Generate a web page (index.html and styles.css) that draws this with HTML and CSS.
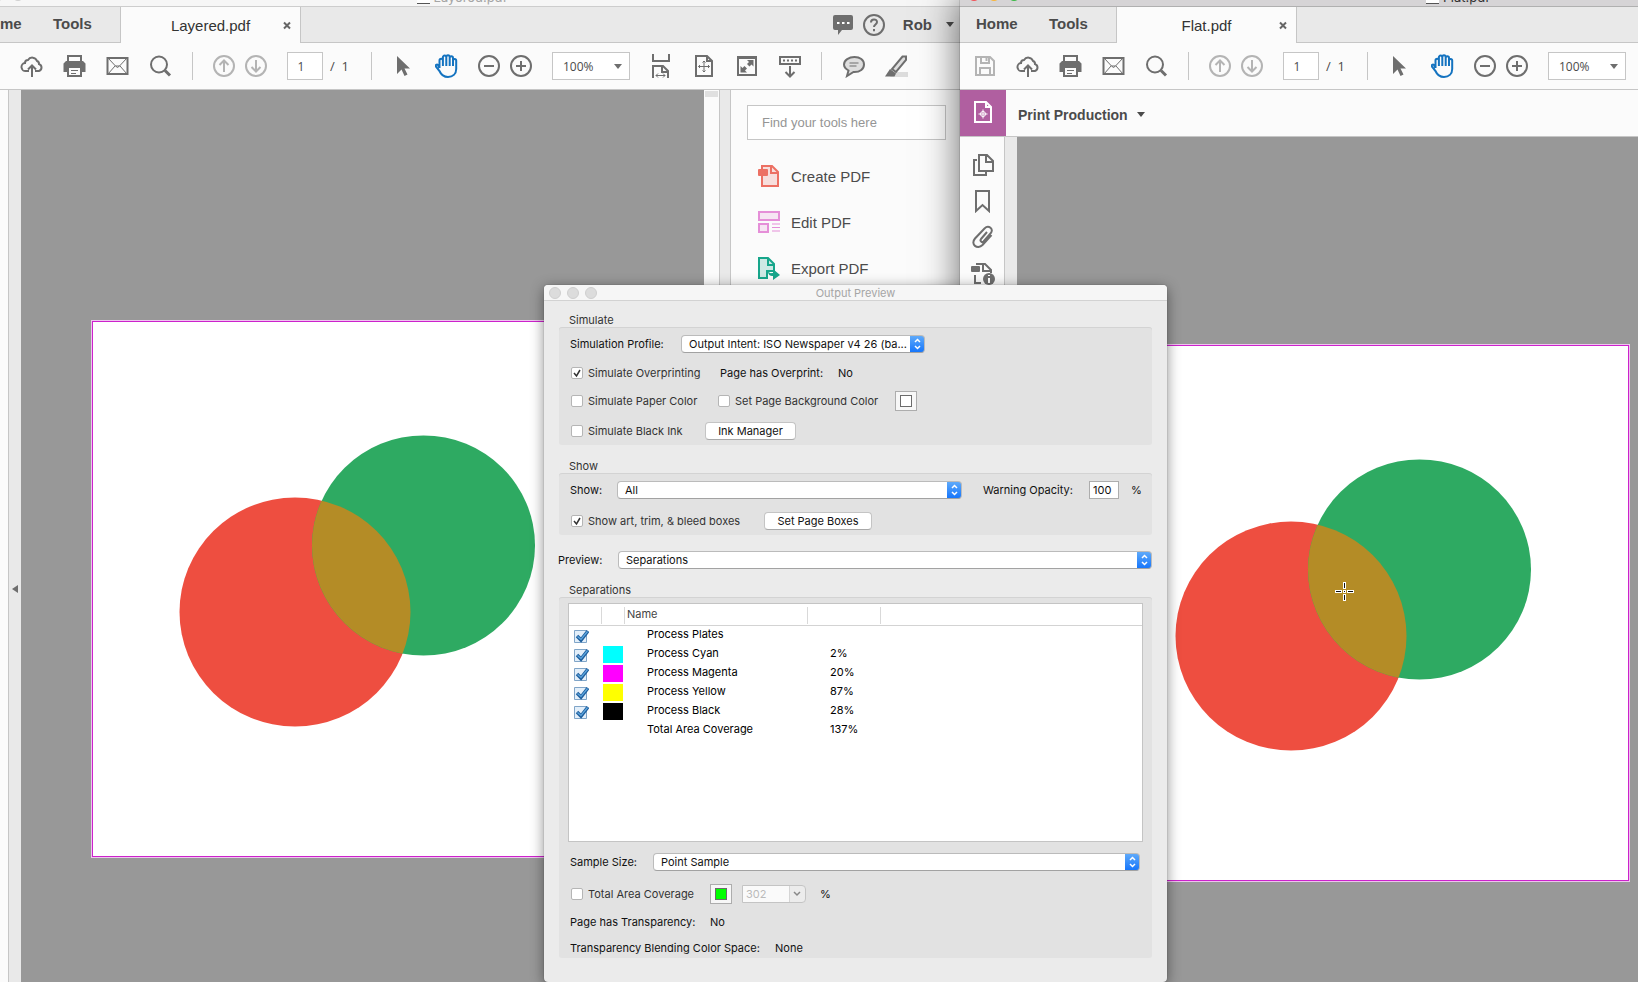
FILE: index.html
```html
<!DOCTYPE html>
<html lang="en">
<head>
  <meta charset="UTF-8">
  <meta name="viewport" content="width=device-width, initial-scale=1.0">
  <title>Output Preview</title>
  <link rel="stylesheet" href="styles.css">
</head>
<body>

<!-- icon set -->
<svg class="sprite" aria-hidden="true">
  <symbol id="save" viewBox="0 0 24 24"><path d="M3 3h14l4 4v14H3z"/><path d="M8 3v6h8V3M13.500 4v3M7 21v-7h10v7"/></symbol>
  <symbol id="cloud" viewBox="0 0 24 24"><path d="M9 17H6a4 4 0 0 1-1-8 3 3 0 0 1 3-3 5 5 0 0 1 9 1 3 3 0 0 1 2 3 3.700 3.700 0 0 1 0 7h-4M12 23V12M8 15.500l4-4 4 4"/></symbol>
  <symbol id="print" viewBox="0 0 24 24"><path d="M5 8V2h13v6"/><path class="fill" d="M3 7h17l2.500 2.500V18H18v-4H5v4H.5V9.500z"/><path d="M5 13v9h13v-9"/><path class="thin" d="M8 16.500h7M8 19.500h5"/></symbol>
  <symbol id="mail" viewBox="0 0 24 24"><path d="M1.500 4h20v16h-20z"/><path class="thin" d="M2 4l7.500 8h4L21 4M2 20l7-8M21 20l-7-8M9.500 12l2 1.500 2-1.500"/></symbol>
  <symbol id="search" viewBox="0 0 24 24"><circle cx="10" cy="10.500" r="8"/><path class="thick" d="M16 16.500l5 5"/></symbol>
  <symbol id="up" viewBox="0 0 24 24"><circle cx="12" cy="12" r="10"/><path d="M12 18V7M7.500 11L12 6.500l4.500 4.500"/></symbol>
  <symbol id="down" viewBox="0 0 24 24"><circle cx="12" cy="12" r="10"/><path d="M12 6v11M7.500 13l4.500 4.500 4.500-4.500"/></symbol>
  <symbol id="arrow" viewBox="0 0 24 24"><path class="fill" d="M5 2v18l4.500-4.500L12.500 22l3-1.500-3-6H18z"/></symbol>
  <symbol id="hand" viewBox="0 0 24 24"><path d="M4.500 14V6.500a1.600 1.600 0 0 1 3.400 0V12M7.900 7V3.300a1.600 1.600 0 0 1 3.400 0V12M11.300 3a1.600 1.600 0 0 1 3.400 0V12M14.700 4a1.600 1.600 0 0 1 3.300 0V12M18 6.500a1.600 1.600 0 0 1 3.200 0V15c0 5-3.500 8-8.200 8-4.500 0-7-2.500-8.500-6L.8 12.500c-.5-1.500 1-2.500 2.200-1.500L4.500 14"/></symbol>
  <symbol id="minus" viewBox="0 0 24 24"><circle cx="12" cy="12" r="10"/><path d="M7 12h10"/></symbol>
  <symbol id="plus" viewBox="0 0 24 24"><circle cx="12" cy="12" r="10"/><path d="M7 12h10M12 7v10"/></symbol>
  <symbol id="fitwidth" viewBox="0 0 24 24"><path d="M4 0v7h16V0M4 24V12h10l5 5v7M13 12v6h6"/><path class="thin" d="M7 21.500h9M9 19.500l-2 2 2 2M14 19.500l2 2-2 2"/></symbol>
  <symbol id="fitpage" viewBox="0 0 24 24"><path d="M4 2h11l5 5v15H4zM15 2v5h5"/><path class="thin" d="M12 7v11M6.500 12.500h11M10.500 8.500L12 7l1.500 1.500M10.500 16.500L12 18l1.500-1.500M8 11l-1.500 1.500L8 14M16 11l1.500 1.500L16 14"/></symbol>
  <symbol id="full" viewBox="0 0 24 24"><path d="M3 3h18v18H3zM3 4h18"/><path class="fill" d="M12 6h6.500v6.500l-2-2-2 2-2.500-2.500 2-2zM12 18.500H5.500V12l2 2 2-2 2.500 2.500-2 2z"/></symbol>
  <symbol id="keys" viewBox="0 0 24 24"><path d="M2 3h20v7H2z"/><path class="dots" d="M5 6.500h14"/><path d="M12 12v10M7.500 18l4.500 4.500 4.500-4.500"/></symbol>
  <symbol id="comment" viewBox="0 0 24 24"><path class="tint" d="M12.500 3C18 3 22 6 22 10.500S18 18 12.500 18h-1L5 22l1.500-5.500C4 15 2 13 2 10.500 2 6 7 3 12.500 3z"/><path class="thin" d="M7.500 9h9M7.500 12h7"/></symbol>
  <symbol id="marker" viewBox="0 0 24 24"><path class="shade" d="M8 18h15v5H5z"/><path class="tint" d="M17.500 2.500H21V6L11 18l-4-3z"/><path class="fill" d="M5 15l6 4.500-1.500 3H0z"/></symbol>
  <symbol id="chat" viewBox="0 0 24 24"><path class="fill" d="M4 2h16a2 2 0 0 1 2 2v11a2 2 0 0 1-2 2h-9l-4 5v-5H4a2 2 0 0 1-2-2V4a2 2 0 0 1 2-2z"/><path class="white" d="M6 10h2.500M11 10h2.500M16 10h2.500"/></symbol>
  <symbol id="help" viewBox="0 0 24 24"><circle cx="12" cy="12" r="10"/><path d="M9 9.500c0-4 6-4 6-.5 0 2.500-3 2.500-3 5M12 16v2.200"/></symbol>
  <symbol id="pages" viewBox="0 0 24 24"><path d="M8 2h8l6 6v10H8zM15 2v7h7M6 7H3v15h12v-3"/></symbol>
  <symbol id="bookmark" viewBox="0 0 24 24"><path d="M5 2h13v20l-6.500-6L5 22z"/></symbol>
  <symbol id="clip" viewBox="0 0 24 24"><path d="M16 7l-6 7c-1.500 2 1 4 2.500 2.500l7-8c4-4.500-2-9-6-5L4 13.500c-5 6 2.500 11.500 7.500 6.500l9-10"/></symbol>
  <symbol id="info" viewBox="0 0 24 24"><path d="M5 3h9l6 6v3M12 3v7h8M4 14v8h6"/><rect class="fill" x="0" y="5" width="9" height="6" rx="1"/><circle class="fill" cx="18" cy="18" r="6"/><path class="white" d="M18 14v1M18 17v5"/></symbol>
  <symbol id="production" viewBox="0 0 24 24"><path d="M5 2h11l5 5v15H5zM16 2v5h5"/><circle class="thin" cx="13" cy="14" r="2.500"/><path class="thin" d="M13 9.500v9M8.500 14h9"/></symbol>
  <symbol id="create" viewBox="0 0 24 24"><path class="tint" d="M5 2h10l6 6v14H5z"/><path d="M14 2v7h7"/><rect class="fill" x="1" y="5" width="10" height="7" rx="1"/></symbol>
  <symbol id="edit" viewBox="0 0 24 24"><path class="tint" d="M2 2h20v8H2zM2 14h9v8H2z"/><path class="thin" d="M15 14h8M15 17.500h8M15 21h8"/></symbol>
  <symbol id="export" viewBox="0 0 24 24"><path class="tint" d="M2 2h9l6 6v7H10v7H2z"/><path d="M11 2v7h6"/><path class="fill" d="M11 15c2 3 3 2 5 2v-4l7 6-7 5v-4c-3 0-5-1-5-5z"/></symbol>
  <symbol id="art" viewBox="0 0 539 534">
    <clipPath id="redclip"><ellipse cx="202" cy="290" rx="115.500" ry="114.500"/></clipPath>
    <ellipse cx="202" cy="290" rx="115.500" ry="114.500" fill="#ee4e40"/>
    <ellipse cx="330.500" cy="223.500" rx="111.500" ry="110" fill="#2eaa62"/>
    <ellipse cx="330.500" cy="223.500" rx="111.500" ry="110" fill="#b48c26" clip-path="url(#redclip)"/>
  </symbol>
</svg>

<main class="desktop">

  <section class="window layered">
    <header class="titlebar"><i></i><i></i><i></i><h2><b class="doc"></b>Layered.pdf</h2></header>
    <nav class="tabs">
      <div class="places"><a href="#">Home</a><a href="#">Tools</a></div>
      <div class="tab">Layered.pdf<button class="close" aria-label="Close tab"><svg viewBox="0 0 8 8"><path d="M1 1l6 6M7 1L1 7"/></svg></button></div>
      <div class="account">
        <button aria-label="Messages"><svg class="icon"><use href="#chat"/></svg></button>
        <button aria-label="Help"><svg class="icon"><use href="#help"/></svg></button>
        <button class="user">Rob<span class="caret"></span></button>
      </div>
    </nav>
    <div class="toolbar">
      <button class="faint" aria-label="Save"><svg class="icon"><use href="#save"/></svg></button>
      <button aria-label="Upload"><svg class="icon"><use href="#cloud"/></svg></button>
      <button aria-label="Print"><svg class="icon"><use href="#print"/></svg></button>
      <button aria-label="Mail"><svg class="icon"><use href="#mail"/></svg></button>
      <button aria-label="Search"><svg class="icon"><use href="#search"/></svg></button>
      <span class="sep"></span>
      <button class="round faint first" aria-label="Previous page"><svg class="icon"><use href="#up"/></svg></button>
      <button class="round faint" aria-label="Next page"><svg class="icon"><use href="#down"/></svg></button>
      <input class="pageno" type="text" value="1" aria-label="Page">
      <span class="total">/&nbsp; 1</span>
      <span class="sep"></span>
      <button aria-label="Select"><svg class="icon"><use href="#arrow"/></svg></button>
      <button class="active" aria-label="Pan"><svg class="icon"><use href="#hand"/></svg></button>
      <button class="round first" aria-label="Zoom out"><svg class="icon"><use href="#minus"/></svg></button>
      <button class="round" aria-label="Zoom in"><svg class="icon"><use href="#plus"/></svg></button>
      <select class="zoom" aria-label="Zoom"><option>100%</option></select>
      <button aria-label="Fit width"><svg class="icon"><use href="#fitwidth"/></svg></button>
      <button aria-label="Fit page"><svg class="icon"><use href="#fitpage"/></svg></button>
      <button aria-label="Full screen"><svg class="icon"><use href="#full"/></svg></button>
      <button aria-label="Read mode"><svg class="icon"><use href="#keys"/></svg></button>
      <span class="sep"></span>
      <button aria-label="Comment"><svg class="icon"><use href="#comment"/></svg></button>
      <button aria-label="Highlight"><svg class="icon"><use href="#marker"/></svg></button>
    </div>
    <div class="workspace">
      <nav class="rail"></nav>
      <div class="strip"><span class="collapse"></span></div>
      <div class="canvas"><svg class="page"><use href="#art"/></svg></div>
      <div class="scroll"><span></span></div>
      <div class="strip divider"></div>
      <aside class="tools">
        <input type="search" placeholder="Find your tools here" aria-label="Find your tools here">
        <a class="create" href="#"><svg class="icon"><use href="#create"/></svg>Create PDF</a>
        <a class="edit" href="#"><svg class="icon"><use href="#edit"/></svg>Edit PDF</a>
        <a class="export" href="#"><svg class="icon"><use href="#export"/></svg>Export PDF</a>
      </aside>
    </div>
  </section>

  <section class="window flat">
    <header class="titlebar"><i></i><i></i><i></i><h2><b class="doc"></b>Flat.pdf</h2></header>
    <nav class="tabs">
      <div class="places"><a href="#">Home</a><a href="#">Tools</a></div>
      <div class="tab">Flat.pdf<button class="close" aria-label="Close tab"><svg viewBox="0 0 8 8"><path d="M1 1l6 6M7 1L1 7"/></svg></button></div>
      <div class="account"></div>
    </nav>
    <div class="toolbar">
      <button class="faint" aria-label="Save"><svg class="icon"><use href="#save"/></svg></button>
      <button aria-label="Upload"><svg class="icon"><use href="#cloud"/></svg></button>
      <button aria-label="Print"><svg class="icon"><use href="#print"/></svg></button>
      <button aria-label="Mail"><svg class="icon"><use href="#mail"/></svg></button>
      <button aria-label="Search"><svg class="icon"><use href="#search"/></svg></button>
      <span class="sep"></span>
      <button class="round faint first" aria-label="Previous page"><svg class="icon"><use href="#up"/></svg></button>
      <button class="round faint" aria-label="Next page"><svg class="icon"><use href="#down"/></svg></button>
      <input class="pageno" type="text" value="1" aria-label="Page">
      <span class="total">/&nbsp; 1</span>
      <span class="sep"></span>
      <button aria-label="Select"><svg class="icon"><use href="#arrow"/></svg></button>
      <button class="active" aria-label="Pan"><svg class="icon"><use href="#hand"/></svg></button>
      <button class="round first" aria-label="Zoom out"><svg class="icon"><use href="#minus"/></svg></button>
      <button class="round" aria-label="Zoom in"><svg class="icon"><use href="#plus"/></svg></button>
      <select class="zoom" aria-label="Zoom"><option>100%</option></select>
    </div>
    <div class="production">
      <span class="badge"><svg class="icon"><use href="#production"/></svg></span>
      <button>Print Production<span class="caret"></span></button>
    </div>
    <div class="workspace">
      <nav class="rail">
        <button aria-label="Pages"><svg class="icon"><use href="#pages"/></svg></button>
        <button aria-label="Bookmarks"><svg class="icon"><use href="#bookmark"/></svg></button>
        <button aria-label="Attachments"><svg class="icon"><use href="#clip"/></svg></button>
        <button aria-label="Standards"><svg class="icon"><use href="#info"/></svg></button>
      </nav>
      <div class="strip"></div>
      <div class="canvas"><svg class="page"><use href="#art"/></svg></div>
      <div class="scroll"></div>
      <div class="strip divider"></div>
      <aside class="tools"></aside>
    </div>
  </section>

  <section class="dialog">
    <header><i></i><i></i><i></i><h1>Output Preview</h1></header>

    <h3>Simulate</h3>
    <div class="group">
      <div class="row tall">
        <label class="w-profile" for="profile">Simulation Profile:</label>
        <select class="popup profile" id="profile"><option>Output Intent: ISO Newspaper v4 26 (ba...</option></select>
      </div>
      <div class="row short">
        <label class="check w-over"><input type="checkbox" checked>Simulate Overprinting</label>
        <span class="w-has">Page has Overprint:</span><span>No</span>
      </div>
      <div class="row medium">
        <label class="check w-paper"><input type="checkbox">Simulate Paper Color</label>
        <label class="check w-bg"><input type="checkbox">Set Page Background Color</label>
        <button class="well" aria-label="Background color"><span></span></button>
      </div>
      <div class="row">
        <label class="check w-ink"><input type="checkbox">Simulate Black Ink</label>
        <button class="push ink">Ink Manager</button>
      </div>
    </div>

    <h3>Show</h3>
    <div class="group">
      <div class="row tall">
        <label class="w-show" for="show">Show:</label>
        <select class="popup show" id="show"><option>All</option></select>
        <label class="w-warn" for="opacity">Warning Opacity:</label>
        <input class="opacity" id="opacity" type="text" value="100">
        <span>%</span>
      </div>
      <div class="row">
        <label class="check w-boxes"><input type="checkbox" checked>Show art, trim, &amp; bleed boxes</label>
        <button class="push boxes">Set Page Boxes</button>
      </div>
    </div>

    <div class="preview">
      <label for="preview">Preview:</label>
      <select class="popup" id="preview"><option>Separations</option></select>
    </div>

    <h3>Separations</h3>
    <div class="group separations">
      <div class="plates">
        <table>
          <thead>
            <tr><th></th><th></th><th>Name</th><th></th><th></th></tr>
          </thead>
          <tbody>
            <tr><td><input type="checkbox" checked aria-label="Process Plates"></td><td></td><td>Process Plates</td><td></td><td></td></tr>
            <tr><td><input type="checkbox" checked aria-label="Process Cyan"></td><td><span class="ink-c"></span></td><td>Process Cyan</td><td>2%</td><td></td></tr>
            <tr><td><input type="checkbox" checked aria-label="Process Magenta"></td><td><span class="ink-m"></span></td><td>Process Magenta</td><td>20%</td><td></td></tr>
            <tr><td><input type="checkbox" checked aria-label="Process Yellow"></td><td><span class="ink-y"></span></td><td>Process Yellow</td><td>87%</td><td></td></tr>
            <tr><td><input type="checkbox" checked aria-label="Process Black"></td><td><span class="ink-k"></span></td><td>Process Black</td><td>28%</td><td></td></tr>
            <tr><td></td><td></td><td>Total Area Coverage</td><td>137%</td><td></td></tr>
          </tbody>
        </table>
      </div>
      <div class="row sample">
        <label class="w-sample" for="sample">Sample Size:</label>
        <select class="popup" id="sample"><option>Point Sample</option></select>
      </div>
      <div class="row short">
        <label class="check w-tac"><input type="checkbox">Total Area Coverage</label>
        <button class="well green" aria-label="Coverage color"><span></span></button>
        <select class="limit" disabled aria-label="Coverage limit"><option>302</option></select>
        <span>%</span>
      </div>
      <div class="row medium"><span class="w-trans">Page has Transparency:</span><span>No</span></div>
      <div class="row last"><span class="w-blend">Transparency Blending Color Space:</span><span>None</span></div>
    </div>
  </section>

  <svg class="crosshair" viewBox="0 0 19 19"><path class="halo" d="M0 9.500h7M12 9.500h7M9.500 0v7M9.500 12v7M8 9.500h3"/><path d="M1 9.500h5M13 9.500h5M9.500 1v5M9.500 13v5M9 9.500h1"/></svg>
</main>
</body>
</html>
```

FILE: styles.css
```css
* {
    box-sizing: border-box;
}
body {
    margin: 0;
    font-family: "Liberation Sans", Arial, sans-serif;
    color: #4b4b4b;
}
button, input, select {
    font: inherit;
    color: inherit;
    margin: 0;
}
button {
    border: 0;
    padding: 0;
    background: none;
}
a {
    color: inherit;
    text-decoration: none;
}
h1, h2, h3 {
    margin: 0;
    font-weight: normal;
}
.sprite {
    position: absolute;
    width: 0;
    height: 0;
}
.desktop {
    position: relative;
    height: 100vh;
    overflow: hidden;
    background: #989898;
}

/* icons */
.icon {
    width: 24px;
    height: 24px;
    display: block;
    flex: none;
    fill: none;
    stroke: currentColor;
    stroke-width: 2;
    color: #6e6e6e;
}
.fill { fill: currentColor; stroke: none; }
.thin { stroke-width: 1; }
.thick { stroke-width: 3; }
.dots { stroke-dasharray: 2 2; }
.tint { fill: currentColor; fill-opacity: 0.2; }
.shade { fill: #dcdcdc; stroke: none; }
.white { stroke: #fff; stroke-width: 2; }
.faint .icon { color: #b4b4b4; }
.active .icon { color: #1473c0; }
.caret {
    display: inline-block;
    border: 4px solid transparent;
    border-top: 5px solid #4b4b4b;
    border-bottom: 0;
}

/* application windows */
.window {
    position: absolute;
    top: -16px;
    width: 996px;
    height: 1104px;
    display: flex;
    flex-direction: column;
    background: #fbfbfb;
}
.layered {
    left: -36px;
}
.flat {
    left: 960px;
    box-shadow: 0 0 1px rgba(0,0,0,0.6), 0 14px 36px rgba(0,0,0,0.6);
}
.titlebar {
    flex: none;
    height: 23px;
    display: flex;
    align-items: center;
    gap: 8px;
    padding-left: 8px;
    position: relative;
    background: #f6f6f6;
    border-bottom: 1px solid #cdcdcd;
    color: #a5a5a5;
}
.titlebar i, .dialog header i {
    width: 12px;
    height: 12px;
    border-radius: 50%;
    background: #dcdcdc;
    border: 1px solid #cfcfcf;
}
.titlebar h2 {
    position: absolute;
    top: 4px;
    left: 0;
    right: 0;
    display: flex;
    justify-content: center;
    gap: 4px;
    font: 13px/18px Inter, sans-serif;
}
.doc {
    width: 13px;
    height: 16px;
    background: #fff;
    border-bottom: 1px solid #555;
}
.flat .titlebar {
    background: #d6d4d6;
    border-color: #b0b0b0;
    color: #333;
}
.flat .titlebar i { border: 0; background: #f25056; }
.flat .titlebar i:nth-child(2) { background: #fab536; }
.flat .titlebar i:nth-child(3) { background: #38b944; }

.tabs {
    flex: none;
    display: flex;
    height: 36px;
}
.places, .account {
    background: #e9e9e9;
    border-bottom: 1px solid #c6c6c6;
    display: flex;
    font-size: 15px;
    font-weight: bold;
    line-height: 34px;
}
.places {
    width: 157px;
    padding-left: 16px;
    border-right: 1px solid #c6c6c6;
}
.places a {
    width: 73px;
}
.places a:last-child {
    width: auto;
}
.tab {
    width: 179px;
    position: relative;
    text-align: center;
    font-size: 15px;
    line-height: 38px;
    color: #333;
}
.close {
    position: absolute;
    right: 9px;
    top: 14px;
}
.close svg {
    display: block;
    width: 8px;
    height: 9px;
    stroke: #666;
    stroke-width: 2;
}
.account {
    flex: 1;
    border-left: 1px solid #c6c6c6;
    justify-content: flex-end;
    align-items: center;
    gap: 7px;
    padding-right: 6px;
}
.user {
    display: flex;
    align-items: center;
    gap: 14px;
    margin-left: 10px;
    font-weight: bold;
}

.toolbar {
    flex: none;
    display: flex;
    align-items: center;
    height: 47px;
    padding-left: 3px;
    border-bottom: 1px solid #c6c6c6;
}
.toolbar button {
    width: 43px;
    display: flex;
    justify-content: center;
}
.toolbar .round {
    width: 32px;
}
.toolbar .first {
    margin-left: 5px;
}
.sep {
    width: 1px;
    height: 28px;
    margin: 0 10px;
    background: #c6c6c6;
}
.pageno {
    width: 36px;
    height: 28px;
    margin-left: 15px;
    border: 1px solid #c6c6c6;
    background: #fff;
    text-align: center;
    padding: 0 8px 0 0;
    font: 12px "Open Sans", sans-serif;
}
.total {
    width: 38px;
    padding-left: 7px;
    font: 13px "Open Sans", sans-serif;
}
.zoom {
    appearance: none;
    width: 78px;
    height: 28px;
    margin: 0 9px 0 15px;
    padding: 0 10px;
    border: 1px solid #c6c6c6;
    border-radius: 0;
    font: 12px "Open Sans", sans-serif;
    background: #fff url("data:image/svg+xml,%3Csvg xmlns='http://www.w3.org/2000/svg' width='8' height='5'%3E%3Cpath d='M0 0h8L4 5z' fill='%236e6e6e'/%3E%3C/svg%3E") no-repeat right 7px center;
}
.production {
    flex: none;
    display: flex;
    height: 47px;
    border-bottom: 1px solid #c6c6c6;
}
.badge {
    width: 46px;
    padding: 10px;
    background: #b05fa0;
}
.badge .icon {
    color: #fff;
}
.production button {
    display: flex;
    align-items: center;
    gap: 9px;
    padding: 3px 0 0 12px;
    font-size: 14px;
    font-weight: bold;
}

.workspace {
    flex: 1;
    display: flex;
}
.rail {
    width: 45px;
    padding-top: 10px;
    border-right: 1px solid #c6c6c6;
}
.rail button {
    display: flex;
    align-items: center;
    height: 36px;
    padding-left: 11px;
}
.strip {
    width: 12px;
    background: #e9e9e9;
    display: flex;
    align-items: center;
}
.divider {
    border: solid #c6c6c6;
    border-width: 0 1px;
}
.collapse {
    margin-left: 3px;
    border: 4px solid transparent;
    border-right: 6px solid #6e6e6e;
    border-left: 0;
}
.canvas {
    flex: 1;
    display: flex;
    align-items: center;
    justify-content: center;
    background: #989898;
}
.page {
    width: 541px;
    height: 536px;
    background: #fff;
    border: 1px solid #cc22cc;
    box-shadow: 0 0 0 1px #efc3ef;
}
.scroll {
    width: 15px;
    padding: 1px;
}
.scroll span {
    display: block;
    height: 6px;
    background: #e0e0e0;
}
.tools {
    width: 229px;
    padding: 15px 14px 0 16px;
}
.tools input {
    appearance: none;
    width: 100%;
    height: 35px;
    margin-bottom: 13px;
    padding: 0 14px;
    border: 1px solid #c6c6c6;
    background: #fff;
    font-size: 13px;
}
.tools input::placeholder {
    color: #959595;
}
.tools a {
    display: flex;
    align-items: center;
    gap: 10px;
    height: 46px;
    padding-left: 10px;
    font-size: 15px;
}
.create .icon { color: #ec7063; }
.edit .icon { color: #e58fd8; }
.export .icon { color: #17a68b; }

/* output preview */
.dialog {
    position: absolute;
    left: 544px;
    top: 285px;
    width: 623px;
    padding-bottom: 24px;
    background: #ebebeb;
    border-radius: 4px;
    box-shadow: 0 0 1px rgba(0,0,0,0.6), 0 3px 14px rgba(0,0,0,0.45);
    font: 11px/14px Inter, sans-serif;
    color: #111;
}
.dialog header {
    position: relative;
    display: flex;
    align-items: center;
    gap: 6px;
    height: 16px;
    padding-left: 5px;
    margin-bottom: 12px;
    background: #f6f6f6;
    border-bottom: 1px solid #d2d2d2;
    border-radius: 4px 4px 0 0;
}
.dialog h1 {
    position: absolute;
    left: 0;
    right: 0;
    text-align: center;
    font-size: 11px;
    color: #a5a5a5;
}
.dialog h3 {
    font-size: 11px;
    margin: 0 25px;
    color: #333;
}
.group {
    margin: 0 15px 14px;
    padding: 0 9px 0 11px;
    background: #e2e2e2;
    border-radius: 3px;
    box-shadow: inset 0 1px #d3d3d3;
}
.row {
    display: flex;
    align-items: center;
    height: 28px;
}
.row.tall { height: 34px; }
.row.medium { height: 32px; }
.row.short { height: 24px; }
.check {
    display: flex;
    align-items: center;
    gap: 5px;
    color: #333;
}
.check input {
    appearance: none;
    width: 12px;
    height: 12px;
    margin-left: 1px;
    border: 1px solid #b5b5b5;
    border-radius: 2px;
    background: #fff;
}
.check input:checked {
    background: #fff url("data:image/svg+xml,%3Csvg xmlns='http://www.w3.org/2000/svg' viewBox='0 0 10 10'%3E%3Cpath d='M2 5l2.500 3L8 2' fill='none' stroke='%23333' stroke-width='1.500'/%3E%3C/svg%3E") center / 10px 10px;
}
.popup {
    appearance: none;
    flex: 1;
    min-width: 0;
    height: 18px;
    padding: 0 16px 0 7px;
    border: 1px solid #bbb;
    border-bottom-color: #a2a2a2;
    border-radius: 4px;
    font-size: 11px;
    line-height: 14px;
    background: #fff url("data:image/svg+xml,%3Csvg xmlns='http://www.w3.org/2000/svg' width='15' height='18'%3E%3ClinearGradient id='g' x2='0' y2='1'%3E%3Cstop stop-color='%2363adfa'/%3E%3Cstop offset='1' stop-color='%231273fb'/%3E%3C/linearGradient%3E%3Cpath d='M0 0h11a4 4 0 0 1 4 4v10a4 4 0 0 1-4 4H0z' fill='url(%23g)'/%3E%3Cpath d='M5 7l2.500-2.500L10 7M5 11l2.500 2.500L10 11' fill='none' stroke='%23fff' stroke-width='1.500'/%3E%3C/svg%3E") no-repeat right center;
    background-origin: border-box;
    background-clip: border-box;
}
.popup.profile { flex: 0 0 244px; }
.popup.show { flex: 0 0 345px; }
.push {
    height: 18px;
    background: #fff;
    border: 1px solid #c4c4c4;
    border-bottom-color: #a8a8a8;
    border-radius: 4px;
    line-height: 14px;
}
.ink { width: 91px; }
.boxes { width: 108px; }
.well {
    width: 22px;
    height: 20px;
    display: flex;
    align-items: center;
    justify-content: center;
    background: #f7f7f7;
    border: 1px solid #adadad;
}
.well span {
    width: 12px;
    height: 12px;
    border: 1px solid #6b6b6b;
    background: #fff;
}
.well.green span {
    background: #0f0;
}
.opacity {
    width: 30px;
    height: 18px;
    margin-right: 12px;
    padding: 0 3px;
    border: 1px solid #adadad;
    background: #fff;
}
.w-profile { width: 111px; }
.w-over { width: 150px; }
.w-has { width: 118px; }
.w-paper { width: 147px; }
.w-bg { width: 178px; }
.w-ink { width: 135px; }
.w-show { width: 47px; }
.w-warn { width: 106px; margin-left: 21px; }
.w-boxes { width: 194px; }
.w-sample { width: 83px; }
.w-tac { width: 140px; }
.w-trans { width: 140px; }
.w-blend { width: 205px; }
.preview {
    display: flex;
    align-items: center;
    margin: 16px 15px 14px 14px;
}
.preview label {
    width: 60px;
}

.separations {
    margin-bottom: 0;
    padding-top: 6px;
    padding-bottom: 1px;
}
.plates {
    height: 239px;
    margin-left: -2px;
    background: #fff;
    border: 1px solid #c4c4c4;
}
table {
    width: 100%;
    table-layout: fixed;
    border-collapse: collapse;
}
th, td {
    padding: 0 0 1px;
    text-align: left;
    font-weight: normal;
}
th {
    height: 21px;
    padding-left: 2px;
    color: #444;
    border-bottom: 1px solid #d3d3d3;
    background: linear-gradient(#d9d9d9, #d9d9d9) no-repeat right 3px / 1px 17px;
}
th:last-child { background: none; }
th:nth-child(1) { width: 33px; }
th:nth-child(2) { width: 23px; }
th:nth-child(3) { width: 183px; }
th:nth-child(4) { width: 73px; }
td {
    height: 19px;
    padding-bottom: 2px;
    color: #000;
}
td:nth-child(3), td:nth-child(4) { padding-left: 22px; }
td:nth-child(1), td:nth-child(2) { padding: 0; }
td span {
    display: block;
    width: 20px;
    height: 17px;
    margin: 2px 0 0 1px;
}
.ink-c { background: #0ff; }
.ink-m { background: #f0f; }
.ink-y { background: #ff0; }
.ink-k { background: #000; }
td input {
    appearance: none;
    display: block;
    width: 15px;
    height: 14px;
    margin: 3px 0 0 5px;
    background: url("data:image/svg+xml,%3Csvg xmlns='http://www.w3.org/2000/svg' width='15' height='14'%3E%3Cpath d='M.5 1.500h12v12H.5z' fill='%23e3effa' stroke='%2380a5c8'/%3E%3Cpath d='M3 7l4 4 7-9' fill='none' stroke='%231f5f9e' stroke-width='3.500'/%3E%3Cpath d='M3.500 7.500L7 10.500l6.500-8' fill='none' stroke='%235fa8e0' stroke-width='1.200'/%3E%3C/svg%3E");
}
.row.sample {
    height: 40px;
    padding-right: 3px;
}
.row.last {
    height: 19px;
}
.limit {
    appearance: none;
    width: 64px;
    height: 18px;
    margin: 0 14px 0 10px;
    padding: 0 3px;
    border: 1px solid #c4c4c4;
    border-radius: 0 4px 4px 0;
    opacity: 1;
    color: #bbb;
    background: #fafafa url("data:image/svg+xml,%3Csvg xmlns='http://www.w3.org/2000/svg' width='16' height='16'%3E%3Cpath d='M0 0h16v16H0z' fill='%23ececec'/%3E%3Cpath d='M.5 0v16' stroke='%23d5d5d5'/%3E%3Cpath d='M5 6l3 3 3-3' fill='none' stroke='%23888' stroke-width='1.500'/%3E%3C/svg%3E") no-repeat right center;
}

.crosshair {
    position: absolute;
    left: 1335px;
    top: 582px;
    width: 19px;
    height: 19px;
    stroke: #111;
    stroke-width: 1;
}
.halo {
    stroke: #fff;
    stroke-width: 3;
}
```
